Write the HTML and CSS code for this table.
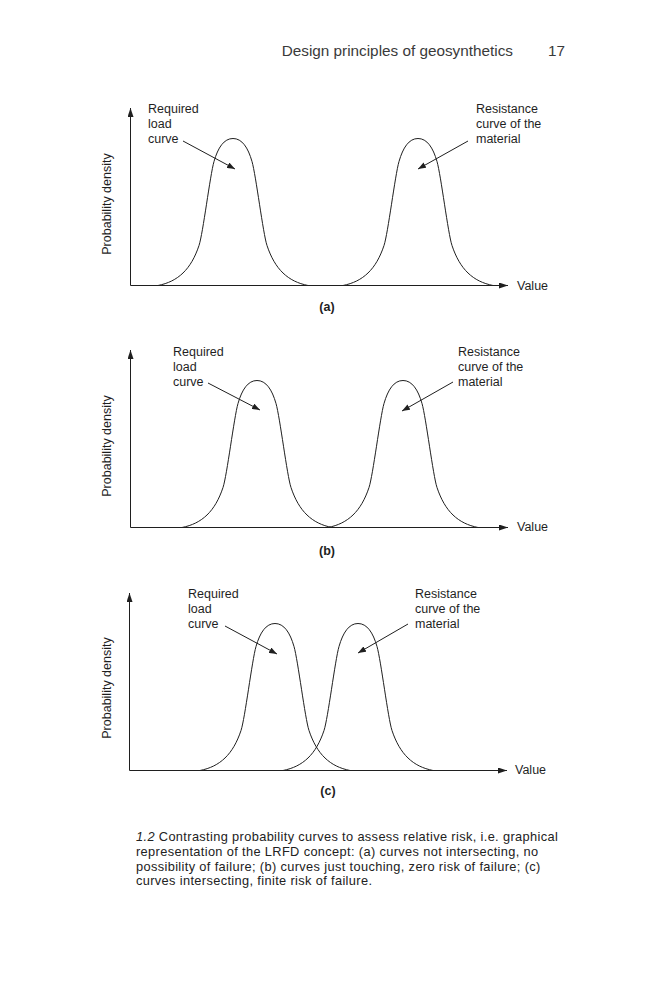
FILE: index.html
```html
<!DOCTYPE html>
<html>
<head>
<meta charset="utf-8">
<link rel="stylesheet" href="styles.css">
</head>
<body>
<div class="page">
  <header class="running-head">
    <span class="title">Design principles of geosynthetics</span>
    <span class="folio">17</span>
  </header>

  <figure class="figure">
    <svg class="panel" viewBox="0 92 666 242" width="666" height="242">
      <defs>
        <marker id="ah" viewBox="0 0 8 6" refX="8" refY="3" markerWidth="8" markerHeight="6" markerUnits="userSpaceOnUse" orient="auto">
          <path d="M0,0 L8,3 L0,6 z" class="head"/>
        </marker>
        <marker id="ax" viewBox="0 0 9 6" refX="9" refY="3" markerWidth="9" markerHeight="6" markerUnits="userSpaceOnUse" orient="auto">
          <path d="M0,0 L9,3 L0,6 z" class="head"/>
        </marker>
      </defs>
      <text class="ylabel" transform="translate(111,204) rotate(-90)">Probability density</text>
      <path class="axis" d="M130.5,285.5 V108" marker-end="url(#ax)"/>
      <path class="axis" d="M130.5,285.5 H508" marker-end="url(#ax)"/>
      <path class="curve" d="M158,285.5 c20,-4 33,-16 41,-40 c4,-12 11,-70 15,-84 c4,-14 10,-23 19,-23 c9,0 15,9 19,23 c4,14 11,72 15,84 c8,24 21,36 41,40"/>
      <path class="curve" d="M343,285.5 c20,-4 33,-16 41,-40 c4,-12 11,-70 15,-84 c4,-14 10,-23 19,-23 c9,0 15,9 19,23 c4,14 11,72 15,84 c8,24 21,36 41,40"/>
      <text class="lbl" x="148" y="113">Required</text>
      <text class="lbl" x="148" y="128">load</text>
      <text class="lbl" x="148" y="143">curve</text>
      <text class="lbl" x="476" y="113">Resistance</text>
      <text class="lbl" x="476" y="128">curve of the</text>
      <text class="lbl" x="476" y="143">material</text>
      <path class="pointer" d="M183,141 L235,169" marker-end="url(#ah)"/>
      <path class="pointer" d="M468,141 L418,169" marker-end="url(#ah)"/>
      <text class="lbl" x="517" y="290">Value</text>
      <text class="tag" x="327" y="311">(a)</text>
    </svg>

    <svg class="panel" viewBox="0 334 666 242" width="666" height="242">
      <text class="ylabel" transform="translate(111,446) rotate(-90)">Probability density</text>
      <path class="axis" d="M130.5,527.5 V350" marker-end="url(#ax)"/>
      <path class="axis" d="M130.5,527.5 H508" marker-end="url(#ax)"/>
      <path class="curve" d="M182,527.5 c20,-4 33,-16 41,-40 c4,-12 11,-70 15,-84 c4,-14 10,-23 19,-23 c9,0 15,9 19,23 c4,14 11,72 15,84 c8,24 21,36 41,40"/>
      <path class="curve" d="M328,527.5 c20,-4 33,-16 41,-40 c4,-12 11,-70 15,-84 c4,-14 10,-23 19,-23 c9,0 15,9 19,23 c4,14 11,72 15,84 c8,24 21,36 41,40"/>
      <text class="lbl" x="173" y="356">Required</text>
      <text class="lbl" x="173" y="371">load</text>
      <text class="lbl" x="173" y="386">curve</text>
      <text class="lbl" x="458" y="356">Resistance</text>
      <text class="lbl" x="458" y="371">curve of the</text>
      <text class="lbl" x="458" y="386">material</text>
      <path class="pointer" d="M208,383 L260,410" marker-end="url(#ah)"/>
      <path class="pointer" d="M453,382 L402,411" marker-end="url(#ah)"/>
      <text class="lbl" x="517" y="531">Value</text>
      <text class="tag" x="327" y="555">(b)</text>
    </svg>

    <svg class="panel" viewBox="0 576 666 242" width="666" height="242">
      <text class="ylabel" transform="translate(111,688) rotate(-90)">Probability density</text>
      <path class="axis" d="M129.5,770.5 V593" marker-end="url(#ax)"/>
      <path class="axis" d="M129.5,770.5 H507" marker-end="url(#ax)"/>
      <path class="curve" d="M200,770.5 c20,-4 33,-16 41,-40 c4,-12 11,-70 15,-84 c4,-14 10,-23 19,-23 c9,0 15,9 19,23 c4,14 11,72 15,84 c8,24 21,36 41,40"/>
      <path class="curve" d="M283,770.5 c20,-4 33,-16 41,-40 c4,-12 11,-70 15,-84 c4,-14 10,-23 19,-23 c9,0 15,9 19,23 c4,14 11,72 15,84 c8,24 21,36 41,40"/>
      <text class="lbl" x="188" y="598">Required</text>
      <text class="lbl" x="188" y="613">load</text>
      <text class="lbl" x="188" y="628">curve</text>
      <text class="lbl" x="415" y="598">Resistance</text>
      <text class="lbl" x="415" y="613">curve of the</text>
      <text class="lbl" x="415" y="628">material</text>
      <path class="pointer" d="M225,626 L277,654" marker-end="url(#ah)"/>
      <path class="pointer" d="M408,624 L358,653" marker-end="url(#ah)"/>
      <text class="lbl" x="515" y="774">Value</text>
      <text class="tag" x="328" y="795">(c)</text>
    </svg>

    <figcaption class="caption"><span class="fignum">1.2</span> Contrasting probability curves to assess relative risk, i.e. graphical<br>representation of the LRFD concept: (a) curves not intersecting, no<br>possibility of failure; (b) curves just touching, zero risk of failure; (c)<br>curves intersecting, finite risk of failure.</figcaption>
  </figure>
</div>
</body>
</html>
```

FILE: styles.css
```css
html, body {
  margin: 0;
  padding: 0;
  background: #ffffff;
}

.page {
  width: 666px;
  height: 1000px;
  overflow: hidden;
}

.running-head {
  display: flex;
  justify-content: flex-end;
  gap: 35px;
  padding: 42px 101px 0 0;
  font-family: "Liberation Sans", Arial, sans-serif;
  font-size: 15.3px;
  line-height: 18px;
  color: #3a3a3a;
}

.figure {
  margin: 32px 0 0 0;
  padding: 0;
}

.panel {
  display: block;
}

.axis, .curve, .pointer {
  fill: none;
  stroke: #1f1f1f;
  stroke-width: 1;
}

.head {
  fill: #1f1f1f;
}

.lbl, .ylabel, .tag {
  font-family: "Liberation Sans", Arial, sans-serif;
  font-size: 12.5px;
  fill: #1f1f1f;
}

.ylabel {
  text-anchor: middle;
}

.tag {
  text-anchor: middle;
  font-weight: bold;
}

.caption {
  margin: 12px 0 0 136px;
  font-family: "Liberation Sans", Arial, sans-serif;
  font-size: 12.8px;
  line-height: 14.8px;
  letter-spacing: 0.36px;
  color: #222222;
  white-space: nowrap;
}

.fignum {
  font-style: italic;
}
```
